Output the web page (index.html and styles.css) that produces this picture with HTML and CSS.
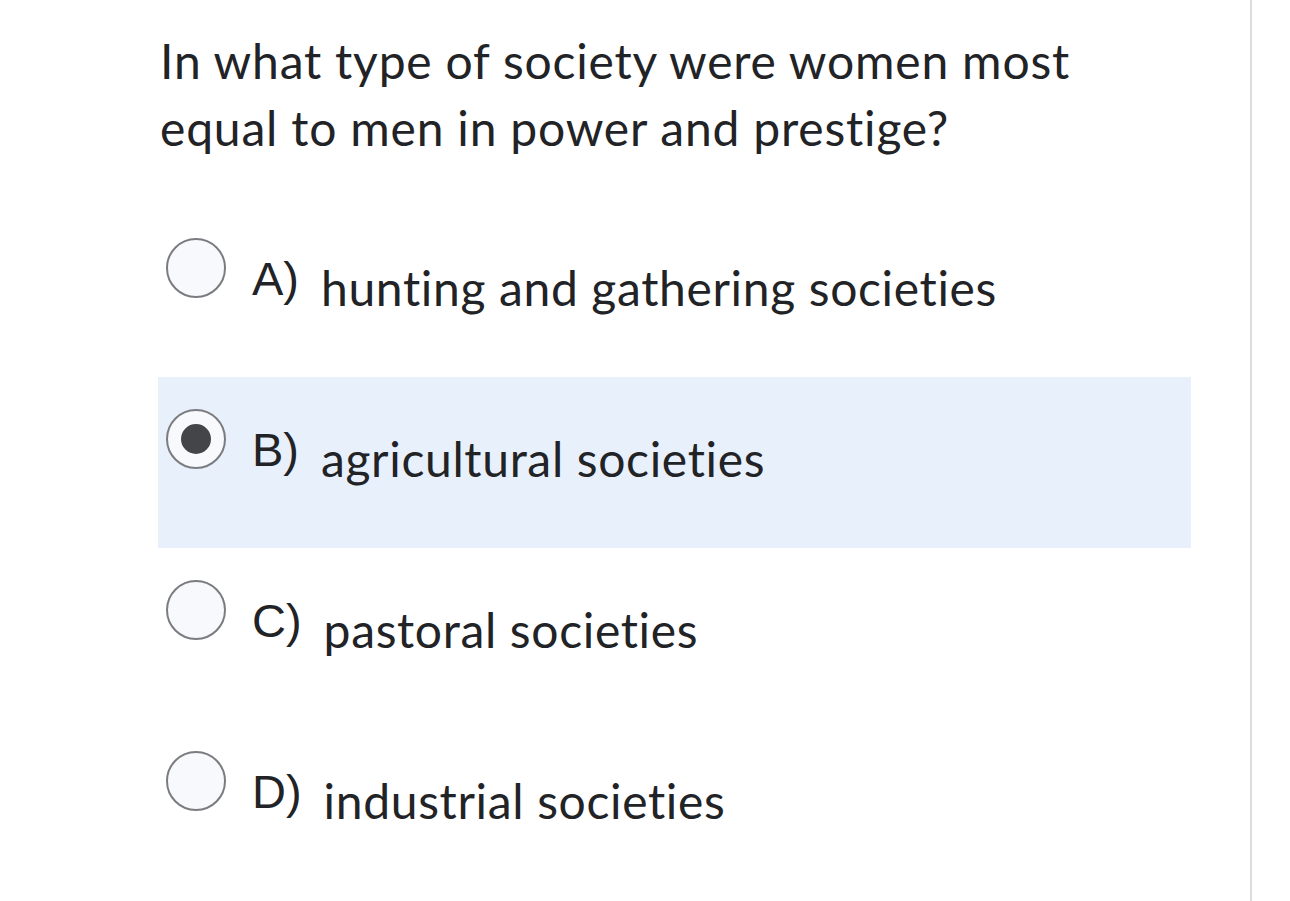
FILE: index.html
```html
<!DOCTYPE html>
<html>
<head>
<meta charset="utf-8">
<link rel="stylesheet" href="styles.css">
</head>
<body>
<div class="page">
  <main class="main">
    <div class="content">
      <p class="question">In what type of society were women most equal to men in power and prestige?</p>
      <div class="options">
        <div class="option">
          <span class="radio"></span>
          <span class="letter">A)</span>
          <span class="text">hunting and gathering societies</span>
        </div>
        <div class="option selected">
          <span class="radio"><span class="dot"></span></span>
          <span class="letter">B)</span>
          <span class="text">agricultural societies</span>
        </div>
        <div class="option">
          <span class="radio"></span>
          <span class="letter">C)</span>
          <span class="text">pastoral societies</span>
        </div>
        <div class="option">
          <span class="radio"></span>
          <span class="letter">D)</span>
          <span class="text">industrial societies</span>
        </div>
      </div>
    </div>
  </main>
</div>
</body>
</html>
```

FILE: styles.css
```css
html, body {
  margin: 0;
  padding: 0;
  background: #ffffff;
}
.page {
  width: 1290px;
  height: 901px;
  overflow: hidden;
}
.main {
  width: 1250px;
  height: 901px;
  border-right: 2px solid #dcdcdc;
  box-sizing: content-box;
}
.content {
  margin-left: 158px;
  width: 1033px;
  padding-top: 27px;
}
.question {
  margin: 0 0 0 2px;
  font-family: Lato, "Noto Sans", sans-serif;
  font-size: 48px;
  line-height: 67px;
  letter-spacing: 0.8px;
  font-variant-ligatures: none;
  color: #222326;
  width: 960px;
}
.options {
  margin-top: 45px;
}
.option {
  height: 171px;
  box-sizing: border-box;
  padding-top: 32px;
  padding-left: 8px;
  display: flex;
  align-items: flex-start;
}
.option.selected {
  background: #e8f0fb;
}
.radio {
  width: 56px;
  height: 56px;
  border: 2px solid #7a7c80;
  border-radius: 50%;
  background: #f7f9fd;
  flex: none;
  display: flex;
  align-items: center;
  justify-content: center;
}
.dot {
  width: 30px;
  height: 30px;
  border-radius: 50%;
  background: #434548;
}
.letter {
  margin-left: 26px;
  margin-top: 16px;
  font-family: "Liberation Sans", Arial, sans-serif;
  font-size: 47px;
  line-height: 50px;
  color: #222326;
}
.text {
  margin-left: 22px;
  margin-top: 22px;
  font-family: Lato, "Noto Sans", sans-serif;
  font-size: 48px;
  line-height: 56px;
  letter-spacing: 0.65px;
  font-variant-ligatures: none;
  color: #222326;
}
```
